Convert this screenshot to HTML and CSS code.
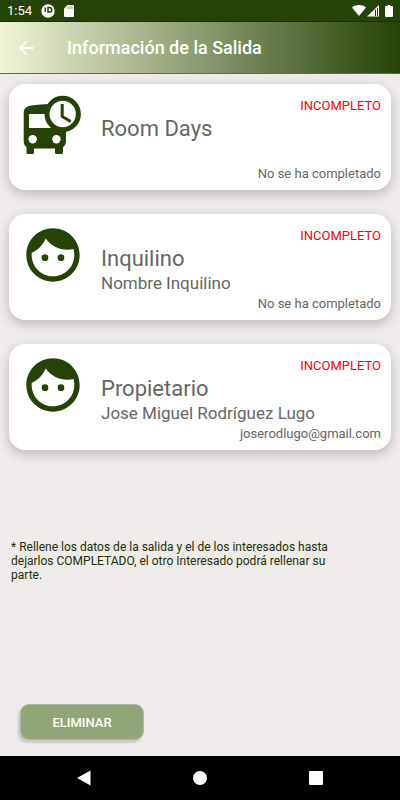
FILE: index.html
```
<!DOCTYPE html>
<html lang="es">
<head>
<meta charset="utf-8">
<meta name="viewport" content="width=device-width, initial-scale=1">
<title>Información de la Salida</title>
<link rel="stylesheet" href="styles.css">
</head>
<body>
<div class="status">
	<span class="time">1:54</span>
	<svg width="14" height="14" viewBox="0 0 14 14"><circle cx="7" cy="7" r="6.700" fill="#fff"/><path d="M4.300 3.500v4.500M7 3v6M7 3.500h1.500a2 2 0 0 1 0 4.500H7" fill="none" stroke="#264207" stroke-width="1.500"/></svg>
	<svg width="10" height="12" viewBox="0 0 10 12"><path d="M3.500 0H9a1 1 0 0 1 1 1v10a1 1 0 0 1-1 1H1a1 1 0 0 1-1-1V3.500z" fill="#fff"/><path d="M4 1.500v2.500M6 1.500v2.500M8 1.500v2.500" stroke="#8b9b70" stroke-width="1"/></svg>
	<svg class="signals" width="42" height="14" viewBox="0 0 42 14">
		<path d="M0 3.500C4 .3 10 .3 14 3.500L7 12z" fill="#fff"/>
		<path d="M27 1v11.500H15z" fill="#fff"/><path d="M23.500 5.500v6.500M25.500 4v8" stroke="#264207" stroke-width="1"/>
		<path d="M35.500 1h3v1H40a1 1 0 0 1 1 1v9a1 1 0 0 1-1 1h-6a1 1 0 0 1-1-1V3a1 1 0 0 1 1-1h1.500z" fill="#fff"/>
	</svg>
</div>
<header class="bar">
	<button class="back" type="button" aria-label="Volver">
		<svg width="22" height="22" viewBox="0 0 24 24"><path d="M20 11H7.830l5.590-5.590L12 4l-8 8 8 8 1.410-1.410L7.830 13H20z" fill="#fff"/></svg>
	</button>
	<h1>Información de la Salida</h1>
</header>
<main>
	<section class="card">
		<svg class="icon" viewBox="0 0 64 64">
			<path fill="#264207" d="M12 12.300Q20 11 42 11L45 20V48Q45 52 42 54V59.500Q42 61 40.500 61H35.500Q34 61 34 59.500V55.500H13V59.500Q13 61 11.500 61H7Q5.500 61 5.500 59.500V54Q2.700 52 2.700 48V19Q2.700 13.500 12 12.300z"/>
			<path fill="#fff" d="M8 21H30V35H8z"/>
			<circle cx="41.700" cy="21" r="15.700" fill="#fff" stroke="#264207" stroke-width="5"/>
			<circle cx="11.700" cy="46.300" r="4.200" fill="#fff"/>
			<circle cx="35.400" cy="46.300" r="4.200" fill="#fff"/>
			<path d="M41.200 11v12.500l8.500 5" fill="none" stroke="#264207" stroke-width="3"/>
		</svg>
		<span class="state">INCOMPLETO</span>
		<h2>Room Days</h2>
		<p class="name"></p>
		<p class="detail">No se ha completado</p>
	</section>
	<section class="card">
		<svg class="icon" viewBox="0 0 24 24"><path fill="#264207" d="M9 11.750a1.250 1.250 0 1 0 0 2.500 1.250 1.250 0 0 0 0-2.500zm6 0a1.250 1.250 0 1 0 0 2.500 1.250 1.250 0 0 0 0-2.500zM12 2C6.480 2 2 6.480 2 12s4.480 10 10 10 10-4.480 10-10S17.520 2 12 2zm0 18c-4.410 0-8-3.590-8-8 0-.290.020-.580.050-.860 2.360-1.050 4.230-2.980 5.210-5.370C11.070 8.330 14.050 10 17.420 10c.780 0 1.530-.090 2.250-.260.210.710.330 1.470.330 2.260 0 4.410-3.590 8-8 8z"/></svg>
		<span class="state">INCOMPLETO</span>
		<h2>Inquilino</h2>
		<p class="name">Nombre Inquilino</p>
		<p class="detail">No se ha completado</p>
	</section>
	<section class="card">
		<svg class="icon" viewBox="0 0 24 24"><path fill="#264207" d="M9 11.750a1.250 1.250 0 1 0 0 2.500 1.250 1.250 0 0 0 0-2.500zm6 0a1.250 1.250 0 1 0 0 2.500 1.250 1.250 0 0 0 0-2.500zM12 2C6.480 2 2 6.480 2 12s4.480 10 10 10 10-4.480 10-10S17.520 2 12 2zm0 18c-4.410 0-8-3.590-8-8 0-.290.020-.580.050-.860 2.360-1.050 4.230-2.980 5.210-5.370C11.070 8.330 14.050 10 17.420 10c.780 0 1.530-.090 2.250-.260.210.710.330 1.470.330 2.260 0 4.410-3.590 8-8 8z"/></svg>
		<span class="state">INCOMPLETO</span>
		<h2>Propietario</h2>
		<p class="name">Jose Miguel Rodríguez Lugo</p>
		<p class="detail">joserodlugo@gmail.com</p>
	</section>
	<p class="note">* Rellene los datos de la salida y el de los interesados hasta dejarlos COMPLETADO, el otro Interesado podrá rellenar su parte.</p>
	<button class="delete" type="button">ELIMINAR</button>
</main>
<nav class="keys">
	<button type="button" aria-label="Atrás"><svg width="16" height="16" viewBox="0 0 16 16"><path d="M14.500 .5v15L1 8z" fill="#fff"/></svg></button>
	<button type="button" aria-label="Inicio"><svg width="16" height="16" viewBox="0 0 16 16"><circle cx="8" cy="8" r="7" fill="#fff"/></svg></button>
	<button type="button" aria-label="Recientes"><svg width="16" height="16" viewBox="0 0 16 16"><rect x="1" y="1" width="14" height="14" rx="1" fill="#fff"/></svg></button>
</nav>
</body>
</html>
```
FILE: styles.css
```
*{ margin:0; padding:0; box-sizing:border-box;}
body{ min-height:100vh; display:flex; flex-direction:column; background:#efebea; font-family:Roboto, "Liberation Sans", sans-serif;}
button{ border:0; background:none; cursor:pointer; font-family:inherit;}
svg{ display:block;}

.status{ height:22px; padding:0 6px 0 7px; display:flex; align-items:center; gap:9px; background:#264207; color:#fff; border-bottom:1px solid #173006;}
.time{ font-size:13px; line-height:22px;}
.signals{ margin-left:auto;}

.bar{ height:52px; padding-left:15px; display:flex; align-items:center; gap:30px; background:linear-gradient(90deg, #f0f5d7, #8b9b70 50%, #264207); border-bottom:1px solid #5c7040;}
.back{ width:22px; height:22px;}
.bar h1{ font-size:18px; line-height:28px; font-weight:500; color:#fff;}

main{ flex:1; padding:10px 9px 16px; display:flex; flex-direction:column;}
.card{ display:grid; grid-template-columns:64px 1fr; grid-template-rows:24px 24px 24px 17px; column-gap:16px; padding:9px 10px 8px 12px; margin-bottom:24px; background:#fff; border-radius:16px; box-shadow:0 4px 12px rgba(0,0,0,0.22); color:#666;}
.icon{ grid-row:1 / 5; width:64px; height:64px;}
.card > :not(.icon){ grid-column:2;}
.state{ text-align:right; font-size:13px; line-height:26px; color:#f00;}
.card h2{ font-size:22px; line-height:24px; font-weight:400;}
.name{ font-size:17px; line-height:24px;}
.detail{ text-align:right; font-size:13px; line-height:17px;}

.note{ max-width:340px; margin-top:66px; padding-left:2px; font-size:12px; line-height:14px; color:#1c3006;}
.delete{ width:124px; height:36px; margin:auto 0 0 11px; background:#91a676; border:1px solid #b0b5ae; border-radius:9px; box-shadow:-2px 3px 2px #c8c8cc; color:#fff; font-size:13px; font-weight:500;}

.keys{ height:44px; padding:0 26px; display:flex; background:#000;}
.keys button{ flex:1; display:flex; align-items:center; justify-content:center;}
```
